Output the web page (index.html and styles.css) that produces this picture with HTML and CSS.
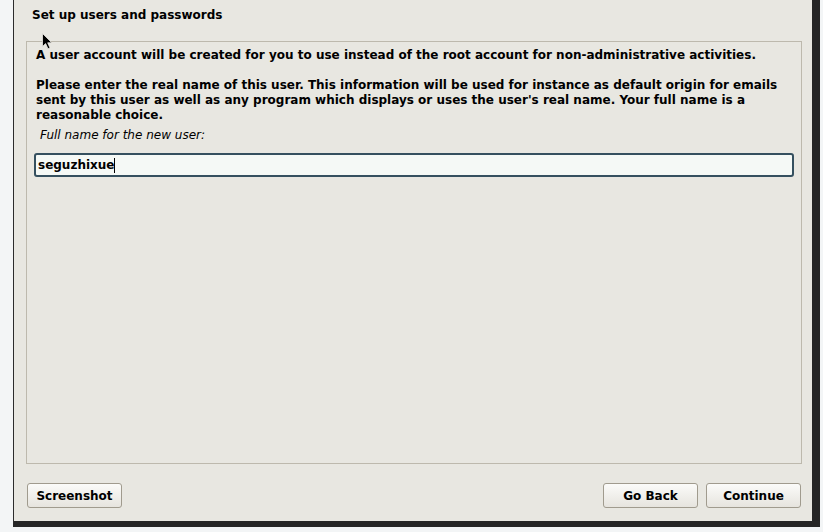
FILE: index.html
```
<!DOCTYPE html>
<html>
<head>
<meta charset="utf-8">
<link rel="stylesheet" href="styles.css">
</head>
<body>
<div class="window">
  <div class="title">Set up users and passwords</div>
  <div class="frame">
    <p class="line">A user account will be created for you to use instead of the root account for non-administrative activities.</p>
    <p class="para">Please enter the real name of this user. This information will be used for instance as default origin for emails sent by this user as well as any program which displays or uses the user's real name. Your full name is a reasonable choice.</p>
    <div class="label">Full name for the new user:</div>
    <div class="input"><span class="value">seguzhixue</span><span class="caret"></span></div>
  </div>
  <div class="buttons">
    <button class="btn">Screenshot</button>
    <div class="spacer"></div>
    <button class="btn">Go Back</button>
    <button class="btn">Continue</button>
  </div>
</div>
<svg class="cursor" width="12" height="17" viewBox="0 0 12 17">
  <path d="M0.5 0.5 L0.5 13.5 L3.6 10.6 L6 15.8 L8 14.9 L5.7 9.8 L9.8 9.8 Z" fill="#000" stroke="#e8e7e1" stroke-width="0.8"/>
</svg>
</body>
</html>
```
FILE: styles.css
```
html, body {
  margin: 0;
  padding: 0;
}
body {
  background: #f3f5f6;
  width: 823px;
  height: 532px;
  overflow: hidden;
  position: relative;
  font-family: "DejaVu Sans", "Liberation Sans", sans-serif;
  color: #000;
}
.window {
  box-sizing: border-box;
  margin-left: 13px;
  width: 807px;
  height: 527px;
  background: #e8e7e1;
  border-left: 1px solid #2c2c2c;
  border-right: 8px solid #262626;
  border-bottom: 6px solid #262626;
  display: flex;
  flex-direction: column;
}
.title {
  font-weight: bold;
  font-size: 12px;
  line-height: 15px;
  padding: 8px 0 0 18px;
  height: 18px;
}
.frame {
  box-sizing: border-box;
  margin: 15px 0 0 12px;
  width: 776px;
  height: 423px;
  border: 1px solid #bdb9ad;
  padding: 6px 9px 0 9px;
}
.line, .para {
  margin: 0;
  font-weight: bold;
  font-size: 12px;
  line-height: 15px;
}
.para {
  margin-top: 15px;
}
.label {
  font-style: italic;
  font-size: 12px;
  line-height: 15px;
  margin-top: 5px;
  padding-left: 4px;
}
.input {
  box-sizing: border-box;
  margin: 10px 0 0 -2px;
  width: 760px;
  height: 24px;
  border: 2px solid #35505f;
  border-radius: 3px;
  background: #f5f9f6;
  padding-left: 2px;
  display: flex;
  align-items: center;
}
.value {
  font-weight: bold;
  font-size: 12px;
}
.caret {
  width: 1px;
  height: 15px;
  background: #000;
}
.buttons {
  display: flex;
  align-items: center;
  gap: 8px;
  padding: 19px 11px 0 13px;
}
.spacer {
  flex: 1;
}
.btn {
  box-sizing: border-box;
  width: 95px;
  height: 25px;
  border: 1px solid #a09b8e;
  border-radius: 3px;
  background: linear-gradient(#fbfbf9, #e6e4de);
  font-family: "DejaVu Sans", "Liberation Sans", sans-serif;
  font-weight: bold;
  font-size: 12px;
  color: #000;
  padding: 0;
}
.cursor {
  position: absolute;
  left: 42px;
  top: 33px;
}
```
